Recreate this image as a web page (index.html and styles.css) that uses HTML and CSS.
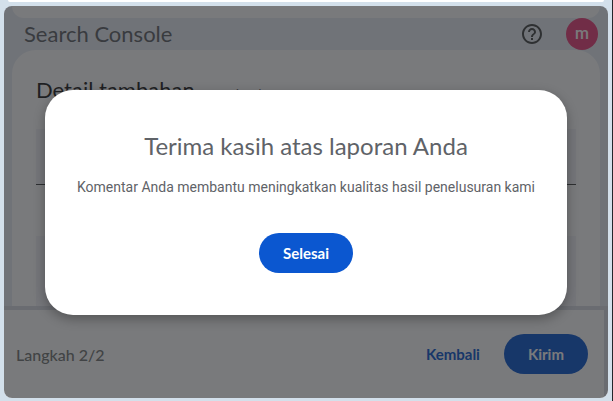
FILE: index.html
```html
<!DOCTYPE html>
<html lang="id">
  <head>
    <meta charset="UTF-8">
    <title>Search Console</title>
    <link rel="stylesheet" href="styles.css">
  </head>
  <body>
    <div class="previous"></div>
    <div class="window">
      <div class="top-card"></div>
      <header class="header">
        <h1>Search Console</h1>
        <button class="help" aria-label="Bantuan">
          <svg viewBox="0 0 24 24" width="24" height="24" fill="currentColor">
            <path d="M11 18h2v-2h-2v2zm1-16C6.480 2 2 6.480 2 12s4.480 10 10 10 10-4.480 10-10S17.520 2 12 2zm0 18c-4.410 0-8-3.590-8-8s3.590-8 8-8 8 3.590 8 8-3.590 8-8 8zm0-14c-2.210 0-4 1.790-4 4h2c0-1.100.9-2 2-2s2 .9 2 2c0 2-3 1.750-3 5h2c0-2.250 3-2.500 3-5 0-2.210-1.790-4-4-4z"/>
          </svg>
        </button>
        <span class="avatar">m</span>
      </header>
      <main class="card">
        <div class="title">
          <h2>Detail tambahan</h2>
          <span class="optional">Opsional</span>
        </div>
        <input class="field" type="text" aria-label="Detail tambahan">
        <div class="field-next"></div>
      </main>
      <footer class="footer">
        <span class="step">Langkah 2/2</span>
        <button class="text-button">Kembali</button>
        <button class="button">Kirim</button>
      </footer>
      <div class="scrim">
        <div class="dialog" role="dialog" aria-labelledby="dialog-title">
          <h2 id="dialog-title">Terima kasih atas laporan Anda</h2>
          <p>Komentar Anda membantu meningkatkan kualitas hasil penelusuran kami</p>
          <button class="button">Selesai</button>
        </div>
      </div>
    </div>
  </body>
</html>
```

FILE: styles.css
```css
* {
  box-sizing: border-box;
}
body {
  display: flex;
  flex-direction: column;
  height: 100vh;
  margin: 0;
  padding: 0 4px 3px;
  border-right: 1px solid #24272b;
  background: #d3e0eb;
  font-family: Lato, "Liberation Sans", sans-serif;
}
h1, h2, p {
  margin: 0;
  font-weight: 400;
}
button {
  border: 0;
  padding: 0;
  background: none;
  font-family: inherit;
}
.previous {
  height: 2px;
  margin: 0 4px 4px;
  background: white;
  border-radius: 0 0 2px 2px;
}
.window {
  position: relative;
  flex: 1;
  display: flex;
  flex-direction: column;
  min-height: 0;
  overflow: hidden;
  border-radius: 8px;
  background: #e9eef6;
}
.top-card {
  flex: none;
  height: 12px;
  margin: 0 8px;
  background: white;
  border-radius: 0 0 24px 24px;
}
.header {
  display: flex;
  align-items: center;
  height: 32px;
  padding: 0 10px 0 20px;
}
.header h1 {
  flex: 1;
  font-size: 22px;
  line-height: 28px;
  color: #5f6368;
}
.help {
  height: 24px;
  color: #444746;
}
.avatar {
  width: 32px;
  height: 32px;
  margin-left: 22px;
  border-radius: 50%;
  background: #ec407a;
  color: white;
  font: 500 16px/32px Roboto, sans-serif;
  text-align: center;
}
.card {
  flex: 1;
  min-height: 0;
  margin: 0 8px;
  padding: 24px 24px 0;
  overflow: hidden;
  border-radius: 24px 24px 0 0;
  background: white;
}
.title {
  display: flex;
  align-items: baseline;
  gap: 20px;
  height: 55px;
  line-height: 32px;
}
.title h2 {
  font-size: 22px;
  color: #1f1f1f;
}
.optional {
  font-size: 12px;
  color: #5f6368;
}
.field {
  display: block;
  width: 100%;
  height: 56px;
  border: 0;
  border-bottom: 1px solid #444746;
  background: #f4f5fb;
}
.field-next {
  height: 72px;
  margin-top: 51px;
  background: #f4f5fb;
}
.footer {
  display: flex;
  align-items: center;
  gap: 24px;
  height: 92px;
  padding: 0 16px 0 12px;
  border-top: 4px solid #dadce4;
  border-right: 4px solid #dadce4;
  background: white;
}
.step {
  flex: 1;
  font-size: 16px;
  font-weight: 500;
  color: #747775;
}
.text-button {
  font-size: 15px;
  font-weight: 700;
  color: #0b57d0;
}
.button {
  height: 40px;
  padding: 0 24px;
  border-radius: 20px;
  background: #0b57d0;
  color: white;
  font-size: 15px;
  font-weight: 700;
}
.scrim {
  position: absolute;
  inset: 0;
  display: flex;
  align-items: center;
  padding: 0 41px;
  background: rgba(32, 33, 36, 0.6);
}
.dialog {
  flex: 1;
  padding: 40px 24px 42px;
  border-radius: 28px;
  background: white;
  box-shadow: 0 4px 12px rgba(0, 0, 0, 0.3);
  text-align: center;
  color: #5f6368;
}
.dialog h2 {
  font-size: 24px;
  line-height: 32px;
}
.dialog p {
  margin: 15px 0 36px;
  font: 14px/20px Roboto, sans-serif;
}
```
